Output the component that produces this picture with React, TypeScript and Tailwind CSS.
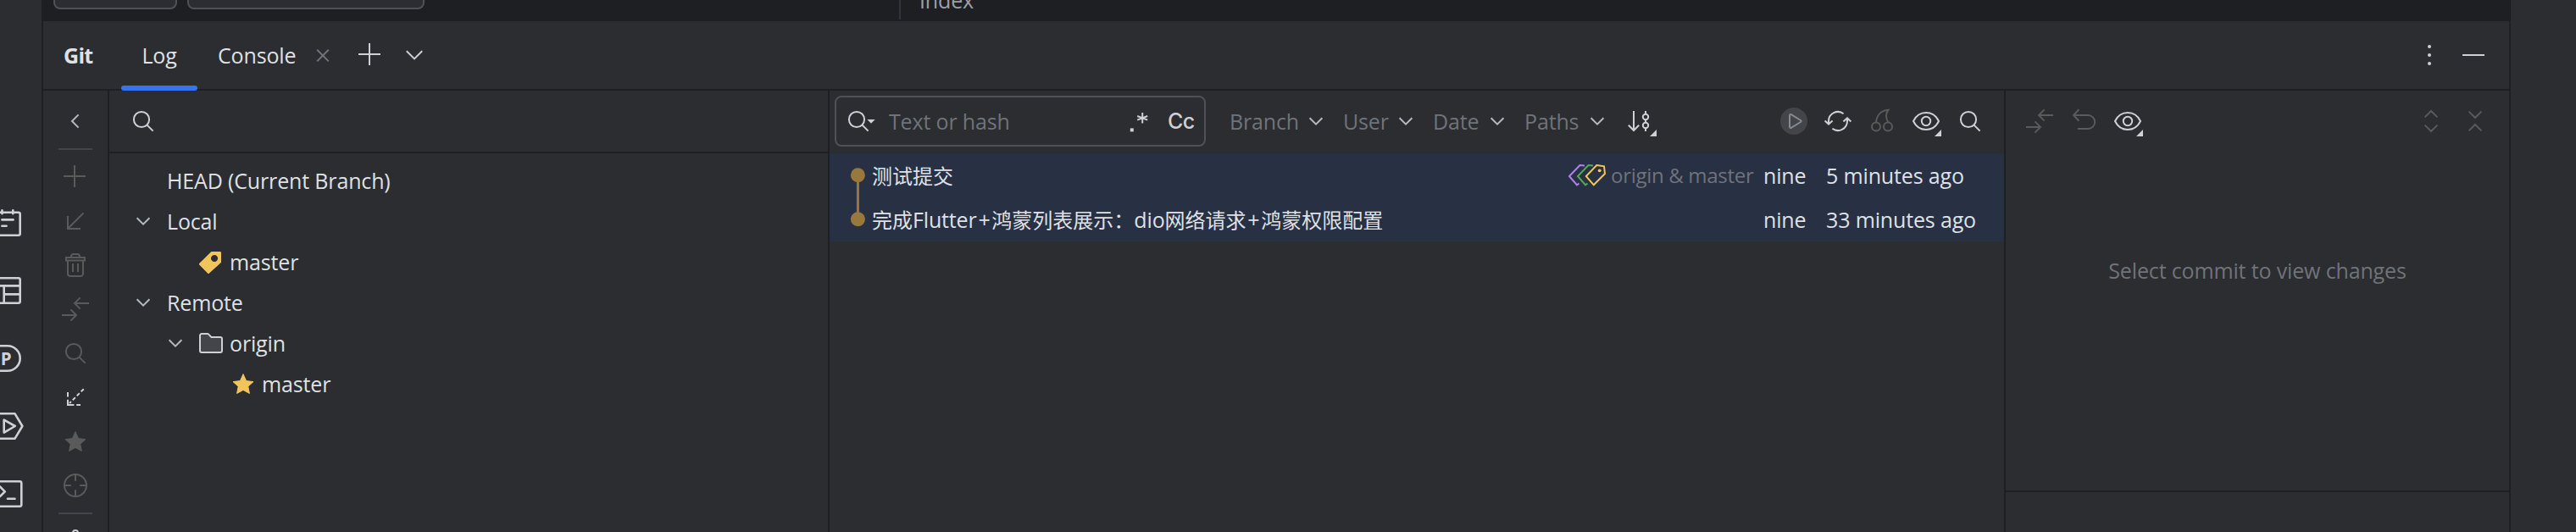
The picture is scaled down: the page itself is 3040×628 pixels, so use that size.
import type { ReactNode } from "react";

type IconProps = {
  children: ReactNode;
  className?: string;
};

// 16-unit icon grid, drawn at double size
function Icon({ children, className = "text-[#ced0d6]" }: IconProps) {
  return (
    <svg
      width="32"
      height="32"
      viewBox="0 0 16 16"
      fill="none"
      stroke="currentColor"
      strokeWidth="1"
      className={`shrink-0 overflow-visible ${className}`}
    >
      {children}
    </svg>
  );
}

const muted = "text-[#5a5a5b]";

const Chevron = () => (
  <Icon className="text-[#b4b8bf]">
    <path d="M4.3 6.1L8 9.8L11.7 6.1" />
  </Icon>
);

const Search = ({ className }: { className?: string }) => (
  <Icon className={className}>
    <circle cx="7" cy="7" r="4.55" />
    <path d="M10.3 10.3L13.8 13.8" />
  </Icon>
);

const Diff = () => (
  <Icon className={muted}>
    <path d="M16 4.5H7.6M10.8 1.2L7.5 4.5L10.8 7.8M0 11.5H8.6M5.2 8.2L8.5 11.5L5.2 14.8" />
  </Icon>
);

const Corner = () => <path d="M17 13V17H13Z" fill="currentColor" stroke="none" />;

const Eye = () => (
  <Icon>
    <path d="M0.5 8C2 4.9 4.8 3 8 3S14 4.9 15.5 8C14 11.1 11.2 13 8 13S2 11.1 0.5 8Z" />
    <circle cx="8" cy="8" r="2.6" />
    <Corner />
  </Icon>
);

const Star = ({ className }: { className?: string }) => (
  <Icon className={className}>
    <path
      d="M8 2.3L9.8 6.3L14 6.8L10.9 9.6L11.7 13.7L8 11.7L4.3 13.7L5.1 9.6L2 6.8L6.2 6.3Z"
      fill="currentColor"
      strokeWidth="0.5"
      strokeLinejoin="round"
    />
  </Icon>
);

const Tag = () => (
  <Icon className="text-[#f2c55c]">
    <path
      d="M8.2 2H13.4a0.6 0.6 0 0 1 0.6 0.6V8.4L7 14.8a0.7 0.7 0 0 1-1 0L1.2 9.9a0.7 0.7 0 0 1 0-1ZM10 4a2 2 0 1 0 0.01 0Z"
      fill="currentColor"
      fillRule="evenodd"
      stroke="none"
    />
  </Icon>
);

const Folder = () => (
  <Icon>
    <path
      d="M1.5 12.5V3.5a1 1 0 0 1 1-1H5.9a1 1 0 0 1 0.7 0.3L8.2 4.5H13.5a1 1 0 0 1 1 1V12.5a1 1 0 0 1-1 1H2.5a1 1 0 0 1-1-1Z"
      fill="#43454a"
    />
  </Icon>
);

function StripIcon({ children }: { children: ReactNode }) {
  return (
    <svg
      width="30"
      height="40"
      viewBox="0 0 30 40"
      fill="none"
      stroke="#ced0d6"
      strokeWidth="2.6"
      strokeLinejoin="round"
      strokeLinecap="round"
    >
      {children}
    </svg>
  );
}

function ToolStrip() {
  return (
    <div className="flex w-[49px] shrink-0 flex-col gap-10 bg-[#2b2d30] pt-[243px]">
      <StripIcon>
        <path d="M-4 7.8H21.7a2 2 0 0 1 2 2V32.7a2 2 0 0 1-2 2H-4M2.5 5.3v4M15.3 5.3v4M2.4 16.4H15.6M2.4 23.7H7.6" />
      </StripIcon>
      <StripIcon>
        <path d="M-4 5.3H21.7a2 2 0 0 1 2 2V32.7a2 2 0 0 1-2 2H-4M-4 14.4H23.7M4.7 24.4H23.7M4.7 14.4V34.7" />
      </StripIcon>
      <StripIcon>
        <path d="M-6 5.3H9a14.7 14.7 0 0 1 0 29.4H-6" />
        <text
          x="0.8"
          y="27.6"
          fill="#ced0d6"
          stroke="none"
          className="font-['Open_Sans',sans-serif] text-[20.5px] font-bold"
        >
          P
        </text>
      </StripIcon>
      <StripIcon>
        <path d="M-4 5.3H17.6L26.4 20L17.6 34.7H-4M4.7 12.6V27.6L17.8 20Z" />
      </StripIcon>
      <StripIcon>
        <path d="M-4 5.3H23.3a2 2 0 0 1 2 2V32.7a2 2 0 0 1-2 2H-4M0 11.5L5.8 17.3L0 23M9 25.7H17.5" />
      </StripIcon>
    </div>
  );
}

function EditorRemnant() {
  return (
    <div className="flex h-[25px] shrink-0 items-start overflow-hidden pl-3">
      <div className="h-[11px] w-[146px] rounded-b-lg border-2 border-t-0 border-[#4e5157] bg-[#2b2d30]" />
      <div className="ml-3 h-[11px] w-[280px] rounded-b-lg border-2 border-t-0 border-[#4e5157] bg-[#2b2d30]" />
      <div className="ml-[560px] h-[23px] w-[2px] bg-[#313438]" />
      <span className="-mt-[17px] ml-[22px] text-[#9da0a8]">Index</span>
    </div>
  );
}

function Header() {
  return (
    <div className="flex h-[82px] shrink-0 border-b-2 border-[#1e1f22] bg-[#2b2d30]">
      <div className="flex w-[92px] items-center pl-6 font-bold tracking-[-0.7px]">Git</div>
      <div className="relative flex w-[90px] items-center justify-center">
        Log
        <div className="absolute inset-x-0 -bottom-[2px] h-[6px] rounded-full bg-[#3574f0]" />
      </div>
      <div className="flex w-[132px] items-center pl-6">Console</div>
      <div className="flex items-center">
        <Icon className="text-[#6f737a]">
          <path d="M4.6 4.9L11.4 11.7M11.4 4.9L4.6 11.7" />
        </Icon>
      </div>
      <div className="ml-6 flex items-center gap-5">
        <Icon>
          <path d="M7.5 1V14M1 7.5H14" />
        </Icon>
        <Icon>
          <path d="M3.4 5.6L8 10.2L12.6 5.6" />
        </Icon>
      </div>
      <div className="ml-auto flex items-center gap-5 pr-[26px]">
        <Icon>
          <g fill="currentColor" stroke="none">
            <circle cx="8" cy="3" r="1" />
            <circle cx="8" cy="8" r="1" />
            <circle cx="8" cy="13" r="1" />
          </g>
        </Icon>
        <Icon>
          <path d="M1.5 8H14.5" />
        </Icon>
      </div>
    </div>
  );
}

function SideActions() {
  return (
    <div className="flex w-[78px] shrink-0 flex-col items-center overflow-hidden border-r-2 border-[#1e1f22] pt-5">
      <Icon className="text-[#b4b8bf]">
        <path d="M9.8 4.2L6 8L9.8 11.8" />
      </Icon>
      <div className="mt-4 h-[2px] w-10 shrink-0 bg-[#43454a]" />
      <div className="mt-4 flex flex-col gap-5">
        <Icon className={muted}>
          <path d="M7.5 1V14M1 7.5H14" />
        </Icon>
        <Icon className={muted}>
          <path d="M3.5 5V12.5H11M12.8 3.2L3.5 12.5" />
        </Icon>
        <Icon className={muted}>
          <path d="M2.5 3.5H13.5V5.2H2.5ZM5.5 3.5V2.9a1.4 1.4 0 0 1 1.4-1.4H9.1a1.4 1.4 0 0 1 1.4 1.4V3.5M3.5 5.2V13a1.5 1.5 0 0 0 1.5 1.5H11a1.5 1.5 0 0 0 1.5-1.5V5.2M6.5 7V12M9.5 7V12" />
        </Icon>
        <Diff />
        <Search className={muted} />
        <Icon>
          <path d="M3.5 5V7.8M3.5 9.4V12.5H7.2M8.6 12.5H11" />
          <path d="M12.9 3.1L4.5 11.5" strokeDasharray="2.2 1.3" />
        </Icon>
        <Star className={muted} />
        <Icon className={muted}>
          <circle cx="8" cy="8" r="6.5" />
          <path d="M8 1V5.4M8 10.6V15M1 8H5.4M10.6 8H15" />
        </Icon>
      </div>
      <div className="mt-4 h-[2px] w-10 shrink-0 bg-[#43454a]" />
      <div className="mt-[18px] h-2 w-2 shrink-0 rounded-full border-2 border-[#ced0d6]" />
    </div>
  );
}

type Branch = {
  name: string;
  indent: string;
  open?: boolean;
  icon?: ReactNode;
};

const branches: Branch[] = [
  { name: "HEAD (Current Branch)", indent: "pl-[68px]" },
  { name: "Local", indent: "pl-6", open: true },
  { name: "master", indent: "pl-[104px]", icon: <Tag /> },
  { name: "Remote", indent: "pl-6", open: true },
  { name: "origin", indent: "pl-[62px]", open: true, icon: <Folder /> },
  { name: "master", indent: "pl-[142px]", icon: <Star className="text-[#f2c55c]" /> },
];

function BranchTree() {
  return (
    <div className="flex w-[850px] shrink-0 flex-col border-r-2 border-[#1e1f22]">
      <div className="flex h-[74px] items-center border-b-2 border-[#1e1f22] pl-6">
        <Search />
      </div>
      <div className="flex flex-col pt-2">
        {branches.map((branch, i) => (
          <div key={i} className={`flex h-12 items-center ${branch.indent}`}>
            {branch.open && (
              <div className={branch.icon ? "mr-[10px]" : "mr-3"}>
                <Chevron />
              </div>
            )}
            {branch.icon && <div className="mr-[6px]">{branch.icon}</div>}
            <span>{branch.name}</span>
          </div>
        ))}
      </div>
    </div>
  );
}

function Filter({ label, className }: { label: string; className: string }) {
  return (
    <div className="flex items-center text-[#6f737a]">
      <span className={`pl-px ${className}`}>{label}</span>
      <Chevron />
    </div>
  );
}

function LogToolbar() {
  return (
    <div className="flex h-[74px] shrink-0 items-center pb-[2px] pl-[6px] pr-6">
      <div className="flex h-[60px] w-[438px] items-center rounded-lg border-2 border-[#4e5157] pl-[10px]">
        <Icon>
          <circle cx="7" cy="7" r="4.55" />
          <path d="M10.3 10.3L13.8 13.8" />
          <path d="M13.2 7H17.8L15.5 9.4Z" fill="currentColor" stroke="none" />
        </Icon>
        <span className="ml-5 text-[#6f737a]">Text or hash</span>
        <div className="ml-auto flex items-center">
          <Icon>
            <rect x="1.9" y="12.2" width="2" height="2" fill="currentColor" stroke="none" />
            <path d="M9.1 3V9.2M6.1 5L12.1 7.3M12.1 5L6.1 7.3" />
          </Icon>
          <span className="ml-4 w-[43px] font-['Inter',sans-serif] text-[25px] font-medium tracking-[-0.6px] text-[#ced0d6]">
            Cc
          </span>
        </div>
      </div>
      <div className="ml-[27px] flex gap-[15px]">
        <Filter label="Branch" className="w-[87px]" />
        <Filter label="User" className="w-[59px]" />
        <Filter label="Date" className="w-[61px]" />
        <Filter label="Paths" className="w-[71px]" />
      </div>
      <div className="ml-5">
        <Icon>
          <path d="M3.5 2V13.8M0.4 10.4L3.5 13.5L6.6 10.4" />
          <path d="M10.5 2V3.8M10.5 7.2V8.8M10.5 12.2V14" />
          <circle cx="10.5" cy="5.5" r="1.6" />
          <circle cx="10.5" cy="10.5" r="1.6" />
          <Corner />
        </Icon>
      </div>
      <div className="ml-auto flex gap-5">
        <Icon className="text-[#868a91]">
          <circle cx="8" cy="8" r="8" fill="#43454a" stroke="none" />
          <path d="M5.5 4.6a0.6 0.6 0 0 1 0.9-0.5L12 7.5a0.6 0.6 0 0 1 0 1L6.4 11.9a0.6 0.6 0 0 1-0.9-0.5Z" />
        </Icon>
        <Icon>
          <path d="M2.5 9.6V8A5.5 5.5 0 0 1 11.3 3.6M0.3 7.8L2.5 9.8L4.8 7.8" />
          <path d="M13.5 6.4V8A5.5 5.5 0 0 1 4.7 12.4M11.2 8.2L13.5 6.2L15.7 8.2" />
        </Icon>
        <Icon className={muted}>
          <circle cx="4.5" cy="11.3" r="2.5" />
          <circle cx="11.5" cy="11.3" r="2.5" />
          <path d="M4.5 8.8C4.8 4.8 7.2 1.8 11.7 1.4C10 3.8 10.2 6.4 11.8 8.8" />
        </Icon>
        <Eye />
        <Search />
      </div>
    </div>
  );
}

// Ideographs are set slightly smaller than the latin text around them
function runClass(run: string) {
  if (run === "+") return "px-[1.8px]";
  return /[A-Za-z]/.test(run) ? "" : "text-[24px] tracking-normal";
}

function Subject({ text }: { text: string }) {
  const runs = text.split(/([A-Za-z]+|\+)/).filter(Boolean);
  return (
    <span className="whitespace-nowrap">
      {runs.map((run, i) => (
        <span key={i} className={runClass(run)}>
          {run}
        </span>
      ))}
    </span>
  );
}

const commits = [
  { subject: "测试提交", author: "nine", date: "5 minutes ago", refs: "origin & master" },
  {
    subject: "完成Flutter+鸿蒙列表展示：dio网络请求+鸿蒙权限配置",
    author: "nine",
    date: "33 minutes ago",
  },
];

function CommitLog() {
  return (
    <div className="flex w-[1388px] shrink-0 flex-col border-r-2 border-[#1e1f22]">
      <LogToolbar />
      <div className="flex bg-[#283044]">
        <svg width="50" height="104" viewBox="0 0 50 104" className="shrink-0">
          <path d="M33.4 26V78" stroke="#98793b" strokeWidth="3" />
          <circle cx="33.4" cy="25.8" r="8.5" fill="#98793b" />
          <circle cx="33.4" cy="77.8" r="8.5" fill="#98793b" />
        </svg>
        <div className="flex flex-1 flex-col">
          {commits.map((commit) => (
            <div key={commit.date} className="flex h-[52px] items-center">
              <Subject text={commit.subject} />
              {commit.refs && (
                <div className="ml-auto flex w-[230px] items-center">
                  <svg width="44" height="26" viewBox="0 0 44 26" fill="none" strokeWidth="2">
                    <path d="M19 1.5L13.5 1L1 14L10 24.3L12.5 22.5" stroke="#b07fe8" />
                    <path d="M29 1.5L23.5 1L11 14L20 24.3L22.5 22.5" stroke="#57a55c" />
                    <path d="M33.3 1L42 2.3L43 11L29.8 24.3L20.8 14Z" stroke="#f2c55c" />
                    <circle cx="36.7" cy="7.3" r="1.9" fill="#f2c55c" />
                  </svg>
                  <span className="ml-[6px] whitespace-nowrap text-[24px] tracking-[-0.3px] text-[#6f737a]">
                    {commit.refs}
                  </span>
                </div>
              )}
              <span className={`w-[74px] shrink-0 ${commit.refs ? "" : "ml-auto"}`}>
                {commit.author}
              </span>
              <span className="w-[210px] shrink-0">{commit.date}</span>
            </div>
          ))}
        </div>
      </div>
    </div>
  );
}

function Details() {
  return (
    <div className="flex flex-1 flex-col">
      <div className="flex h-[72px] shrink-0 items-center gap-5 px-6">
        <Diff />
        <Icon className={muted}>
          <path d="M5.2 1.1L2 4.5L5.2 7.9M2 4.5H10.6a4 4 0 0 1 0 8H4.4" />
        </Icon>
        <Eye />
        <div className="ml-auto flex gap-5">
          <Icon className={muted}>
            <path d="M4.3 5.7L8 2L11.7 5.7M4.3 10.3L8 14L11.7 10.3" />
          </Icon>
          <Icon className={muted}>
            <path d="M4.3 2.3L8 6L11.7 2.3M4.3 13.7L8 10L11.7 13.7" />
          </Icon>
        </div>
      </div>
      <div className="flex h-[402px] shrink-0 justify-center border-b-2 border-[#1e1f22] pt-[123px] text-[#6f737a]">
        Select commit to view changes
      </div>
    </div>
  );
}

export default function App() {
  return (
    <div className="flex h-[628px] w-[3040px] overflow-hidden bg-[#1e1f22] font-['Open_Sans','Noto_Sans_CJK_SC',sans-serif] text-[25px] leading-[34px] tracking-[-0.15px] text-[#dfe1e5]">
      <ToolStrip />
      <div className="flex w-[2914px] shrink-0 flex-col border-x-2 border-[#1e1f22]">
        <EditorRemnant />
        <Header />
        <div className="flex flex-1 overflow-hidden bg-[#2b2d30]">
          <SideActions />
          <BranchTree />
          <CommitLog />
          <Details />
        </div>
      </div>
      <div className="flex-1 bg-[#2b2d30]" />
    </div>
  );
}
